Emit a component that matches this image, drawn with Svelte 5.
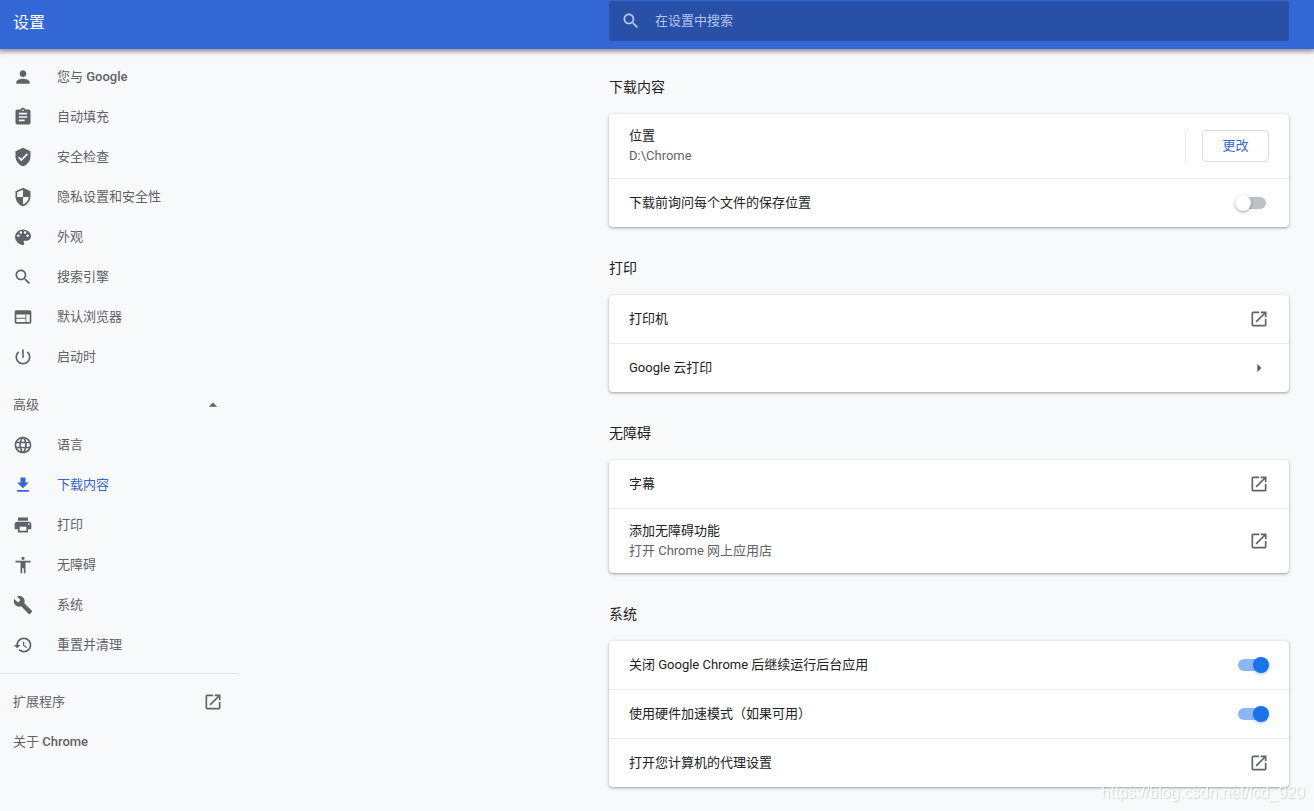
<script>
  const icons = {
    person: "M12 12c2.21 0 4-1.79 4-4s-1.79-4-4-4-4 1.79-4 4 1.79 4 4 4zm0 2c-2.67 0-8 1.34-8 4v2h16v-2c0-2.66-5.33-4-8-4z",
    assignment: "M19 3h-4.18C14.4 1.84 13.3 1 12 1c-1.3 0-2.4.84-2.82 2H5c-1.1 0-2 .9-2 2v14c0 1.1.9 2 2 2h14c1.1 0 2-.9 2-2V5c0-1.1-.9-2-2-2zm-7 0c.55 0 1 .45 1 1s-.45 1-1 1-1-.45-1-1 .45-1 1-1zm2 14H7v-2h7v2zm3-4H7v-2h10v2zm0-4H7V7h10v2z",
    verified: "M12 1L3 5v6c0 5.55 3.84 10.74 9 12 5.16-1.26 9-6.45 9-12V5l-9-4zm-2 16l-4-4 1.41-1.41L10 14.17l6.59-6.59L18 9l-8 8z",
    security: "M12 1L3 5v6c0 5.55 3.84 10.74 9 12 5.16-1.26 9-6.45 9-12V5l-9-4zm0 10.99h7c-.53 4.12-3.28 7.79-7 8.94V12H5V6.3l7-3.11v8.8z",
    palette: "M12 3c-4.97 0-9.5 3.8-9.5 9 0 4.97 4.53 9.5 9.5 9.5.83 0 1.5-.67 1.5-1.5 0-.39-.15-.74-.39-1.01-.23-.26-.38-.61-.38-.99 0-.83.67-1.5 1.5-1.5H16c3.04 0 5.5-2.46 5.5-5.5C21.5 6.58 17.24 3 12 3zm-5.5 9c-.83 0-1.5-.67-1.5-1.5S5.67 9 6.5 9 8 9.67 8 10.5 7.33 12 6.5 12zm3-4C8.67 8 8 7.33 8 6.5S8.67 5 9.5 5s1.5.67 1.5 1.5S10.33 8 9.5 8zm5 0c-.83 0-1.5-.67-1.5-1.5S13.67 5 14.5 5s1.5.67 1.5 1.5S15.33 8 14.5 8zm3 4c-.83 0-1.5-.67-1.5-1.5S16.67 9 17.5 9s1.5.67 1.5 1.5-.67 1.5-1.5 1.5z",
    search: "M15.5 14h-.79l-.28-.27C15.41 12.59 16 11.11 16 9.5 16 5.91 13.09 3 9.5 3S3 5.91 3 9.5 5.91 16 9.5 16c1.61 0 3.09-.59 4.23-1.57l.27.28v.79l5 4.99L20.49 19l-4.99-5zm-6 0C7.01 14 5 11.99 5 9.5S7.01 5 9.5 5 14 7.01 14 9.5 11.99 14 9.5 14z",
    web: "M20 4H4c-1.1 0-1.99.9-1.99 2L2 18c0 1.1.9 2 2 2h16c1.1 0 2-.9 2-2V6c0-1.1-.9-2-2-2zm-5 14H4v-4h11v4zm0-5H4V9h11v4zm5 5h-4V9h4v9z",
    power: "M13 3h-2v10h2V3zm4.83 2.17l-1.42 1.42C17.99 7.86 19 9.81 19 12c0 3.87-3.13 7-7 7s-7-3.13-7-7c0-2.19 1.01-4.14 2.58-5.42L6.17 5.17C4.23 6.82 3 9.26 3 12c0 4.97 4.03 9 9 9s9-4.03 9-9c0-2.74-1.23-5.18-3.17-6.83z",
    language: "M11.99 2C6.47 2 2 6.48 2 12s4.47 10 9.99 10C17.52 22 22 17.52 22 12S17.52 2 11.99 2zm6.93 6h-2.95c-.32-1.25-.78-2.45-1.38-3.56 1.84.63 3.37 1.91 4.33 3.56zM12 4.04c.83 1.2 1.48 2.53 1.91 3.96h-3.82c.43-1.43 1.08-2.76 1.91-3.96zM4.26 14C4.1 13.36 4 12.69 4 12s.1-1.36.26-2h3.38c-.08.66-.14 1.32-.14 2s.06 1.34.14 2H4.26zm.82 2h2.95c.32 1.25.78 2.45 1.38 3.56-1.84-.63-3.37-1.9-4.33-3.56zm2.95-8H5.08c.96-1.66 2.49-2.93 4.33-3.56C8.81 5.55 8.35 6.75 8.03 8zM12 19.96c-.83-1.2-1.48-2.53-1.91-3.96h3.82c-.43 1.43-1.08 2.76-1.91 3.96zM14.34 14H9.66c-.09-.66-.16-1.32-.16-2s.07-1.35.16-2h4.68c.09.65.16 1.32.16 2s-.07 1.34-.16 2zm.25 5.56c.6-1.11 1.06-2.31 1.38-3.56h2.95c-.96 1.65-2.49 2.93-4.33 3.56zM16.36 14c.08-.66.14-1.32.14-2s-.06-1.34-.14-2h3.38c.16.64.26 1.31.26 2s-.1 1.36-.26 2h-3.38z",
    download: "M19 9h-4V3H9v6H5l7 7 7-7zM5 18v2h14v-2H5z",
    print: "M19 8H5c-1.66 0-3 1.34-3 3v6h4v4h12v-4h4v-6c0-1.66-1.34-3-3-3zm-3 11H8v-5h8v5zm3-7c-.55 0-1-.45-1-1s.45-1 1-1 1 .45 1 1-.45 1-1 1zm-1-9H6v4h12V3z",
    accessibility: "M12 2c1.1 0 2 .9 2 2s-.9 2-2 2-2-.9-2-2 .9-2 2-2zm9 7h-6v13h-2v-6h-2v6H9V9H3V7h18v2z",
    build: "M22.7 19l-9.1-9.1c.9-2.3.4-5-1.5-6.9-2-2-5-2.4-7.4-1.3L9 6 6 9 1.6 4.7C.4 7.1.9 10.1 2.9 12.1c1.9 1.9 4.6 2.4 6.9 1.5l9.1 9.1c.4.4 1 .4 1.4 0l2.3-2.3c.5-.4.5-1.1.1-1.4z",
    restore: "M13 3c-4.97 0-9 4.03-9 9H1l3.89 3.89.07.14L9 12H6c0-3.87 3.13-7 7-7s7 3.13 7 7-3.13 7-7 7c-1.93 0-3.68-.79-4.94-2.06l-1.42 1.42C8.27 19.99 10.51 21 13 21c4.97 0 9-4.03 9-9s-4.03-9-9-9zm-1 5v5l4.28 2.54.72-1.21-3.5-2.08V8H12z",
    external: "M19 19H5V5h7V3H5c-1.11 0-2 .9-2 2v14c0 1.1.89 2 2 2h14c1.1 0 2-.9 2-2v-7h-2v7zM14 3v2h3.59l-9.83 9.83 1.41 1.41L19 6.41V10h2V3h-7z",
    arrowUp: "M7 14l5-5 5 5z",
    arrowRight: "M10 7v10l5-5z",
  };

  const basicMenu = [
    { icon: "person", text: "您与", latin: "Google" },
    { icon: "assignment", text: "自动填充" },
    { icon: "verified", text: "安全检查" },
    { icon: "security", text: "隐私设置和安全性" },
    { icon: "palette", text: "外观" },
    { icon: "search", text: "搜索引擎" },
    { icon: "web", text: "默认浏览器" },
    { icon: "power", text: "启动时" },
  ];

  const advancedMenu = [
    { icon: "language", text: "语言" },
    { icon: "download", text: "下载内容" },
    { icon: "print", text: "打印" },
    { icon: "accessibility", text: "无障碍" },
    { icon: "build", text: "系统" },
    { icon: "restore", text: "重置并清理" },
  ];

  let sections = $state([
    {
      title: "下载内容",
      rows: [
        { label: "位置", sub: "D:\\Chrome", type: "button", action: "更改" },
        { label: "下载前询问每个文件的保存位置", type: "toggle", on: false },
      ],
    },
    {
      title: "打印",
      rows: [
        { label: "打印机", type: "external" },
        { label: "Google 云打印", type: "arrowRight" },
      ],
    },
    {
      title: "无障碍",
      rows: [
        { label: "字幕", type: "external" },
        { label: "添加无障碍功能", sub: "打开 Chrome 网上应用店", type: "external" },
      ],
    },
    {
      title: "系统",
      rows: [
        { label: "关闭 Google Chrome 后继续运行后台应用", type: "toggle", on: true },
        { label: "使用硬件加速模式（如果可用）", type: "toggle", on: true },
        { label: "打开您计算机的代理设置", type: "external" },
      ],
    },
  ]);

  let selected = $state("下载内容");
  let advancedOpen = $state(true);
  let query = $state("");
</script>

{#snippet icon(name)}
  <svg class="icon" viewBox="0 0 24 24" aria-hidden="true"><path d={icons[name]} /></svg>
{/snippet}

{#snippet menuItem(item)}
  <a
    class="item"
    class:selected={selected == item.text}
    href="#{item.icon}"
    onclick={() => (selected = item.text)}>
    {@render icon(item.icon)}
    <span>{item.text}{#if item.latin}&nbsp;<b>{item.latin}</b>{/if}</span>
  </a>
{/snippet}

<header>
  <h1>设置</h1>
  <label class="search">
    {@render icon("search")}
    <input type="text" placeholder="在设置中搜索" aria-label="在设置中搜索" bind:value={query} />
  </label>
</header>

<div class="page">
  <nav>
    {#each basicMenu as item}
      {@render menuItem(item)}
    {/each}

    <button class="item advanced" class:closed={!advancedOpen} onclick={() => (advancedOpen = !advancedOpen)}>
      <span>高级</span>
      {@render icon("arrowUp")}
    </button>
    {#if advancedOpen}
      {#each advancedMenu as item}
        {@render menuItem(item)}
      {/each}
    {/if}

    <hr />
    <a class="item wide" href="#extensions">
      <span>扩展程序</span>
      {@render icon("external")}
    </a>
    <a class="item wide" href="#about"><span>关于 <b>Chrome</b></span></a>
  </nav>

  <main>
    {#each sections as section}
      <section>
        <h2>{section.title}</h2>
        <div class="card">
          {#each section.rows as row}
            {#if row.type == "toggle"}
              <label class="row">
                <span class="text">{row.label}</span>
                <input class="toggle" type="checkbox" bind:checked={row.on} />
              </label>
            {:else if row.type == "button"}
              <div class="row two-line">
                <div class="text">{row.label}<small>{row.sub}</small></div>
                <div class="action">
                  <button>{row.action}</button>
                </div>
              </div>
            {:else}
              <a class="row" class:two-line={row.sub} href="#{row.type}">
                <span class="text">{row.label}{#if row.sub}<small>{row.sub}</small>{/if}</span>
                {@render icon(row.type)}
              </a>
            {/if}
          {/each}
        </div>
      </section>
    {/each}
  </main>
</div>

<div class="watermark">https://blog.csdn.net/lcd_920</div>

<style>
  :global(body) {
    margin: 0;
    background: #f8f9fb;
    color: #202124;
    font-family: Roboto, "Noto Sans CJK SC", sans-serif;
    font-size: 13px;
    line-height: 20px;
  }

  a {
    color: inherit;
    text-decoration: none;
  }

  button,
  input {
    font: inherit;
  }

  b {
    font-weight: 500;
  }

  .icon {
    display: block;
    flex: none;
    width: 20px;
    height: 20px;
    fill: #5f6368;
  }

  header {
    position: sticky;
    top: 0;
    z-index: 1;
    display: flex;
    align-items: center;
    justify-content: space-between;
    box-sizing: border-box;
    padding: 1px 25px 8px 13px;
    background: #3367d6;
    box-shadow: 0 2px 4px 1px rgba(60, 64, 67, 0.5);
  }

  h1 {
    margin: 0;
    padding-top: 4px;
    color: #fff;
    font-size: 16px;
    font-weight: 400;
    line-height: 24px;
  }

  .search {
    display: flex;
    align-items: center;
    box-sizing: border-box;
    width: 680px;
    height: 40px;
    padding: 0 12px;
    gap: 14px;
    border-radius: 2px;
    background: #2850a7;
  }
  .search .icon {
    fill: #bccbed;
  }
  .search input {
    flex: 1;
    min-width: 0;
    padding: 0;
    border: 0;
    outline: 0;
    background: none;
    color: #fff;
  }
  .search input::placeholder {
    color: #b4c5ea;
    opacity: 1;
  }

  .page {
    display: flex;
    justify-content: space-between;
    padding-right: 25px;
  }

  nav {
    width: 239px;
    padding-top: 8px;
    color: #5f6368;
  }

  .item {
    display: flex;
    align-items: center;
    box-sizing: border-box;
    width: 100%;
    height: 40px;
    padding: 0 16px 0 13px;
    gap: 24px;
  }
  .item.selected {
    color: #3367d6;
  }
  .item.selected .icon {
    fill: #3367d6;
  }
  .advanced,
  .wide {
    justify-content: space-between;
  }
  .advanced {
    margin-top: 8px;
    border: 0;
    background: none;
    color: inherit;
    cursor: pointer;
  }
  .closed .icon {
    transform: rotate(180deg);
  }

  hr {
    margin: 8px 0;
    border: 0;
    border-top: 1px solid #dfe1e4;
  }

  main {
    width: 680px;
    padding: 28px 0 24px;
  }

  section + section {
    margin-top: 31px;
  }

  h2 {
    margin: 0 0 17px;
    font-size: 14px;
    font-weight: 400;
    line-height: 20px;
  }

  .card {
    border-radius: 4px;
    background: #fff;
    box-shadow: 0 1px 2px 0 rgba(60, 64, 67, 0.3), 0 1px 3px 1px rgba(60, 64, 67, 0.15);
  }

  .row {
    display: flex;
    align-items: center;
    min-height: 48px;
    padding: 0 20px;
  }
  .row + .row {
    border-top: 1px solid #e8eaed;
  }
  .two-line {
    min-height: 64px;
  }

  .text {
    flex: 1;
  }

  small {
    display: block;
    color: #5f6368;
    font-size: 13px;
  }

  .action {
    padding-left: 16px;
    border-left: 1px solid #e8eaed;
  }
  .action button {
    display: block;
    min-width: 67px;
    height: 32px;
    padding: 0 16px;
    border: 1px solid #dadce0;
    border-radius: 4px;
    background: #fff;
    color: #3367d6;
    cursor: pointer;
  }

  .toggle {
    position: relative;
    flex: none;
    width: 34px;
    height: 16px;
    margin: 0;
    appearance: none;
    cursor: pointer;
  }
  .toggle::before {
    content: "";
    position: absolute;
    inset: 2px 3px;
    border-radius: 6px;
    background: #bdc1c6;
  }
  .toggle::after {
    content: "";
    position: absolute;
    top: 0;
    left: 0;
    width: 16px;
    height: 16px;
    border-radius: 50%;
    background: #fff;
    box-shadow: 0 1px 3px 0 rgba(0, 0, 0, 0.4);
  }
  .toggle:checked::before {
    background: #8cb7f6;
  }
  .toggle:checked::after {
    left: 18px;
    background: #1a73e8;
    box-shadow: 0 1px 3px 0 rgba(26, 115, 232, 0.4);
  }

  .watermark {
    position: fixed;
    right: 9px;
    bottom: 8px;
    color: rgba(255, 255, 255, 0.8);
    font-family: "Liberation Sans", sans-serif;
    font-size: 16px;
    text-shadow: 1px 1px 1px rgba(0, 0, 0, 0.14);
    pointer-events: none;
  }
</style>
